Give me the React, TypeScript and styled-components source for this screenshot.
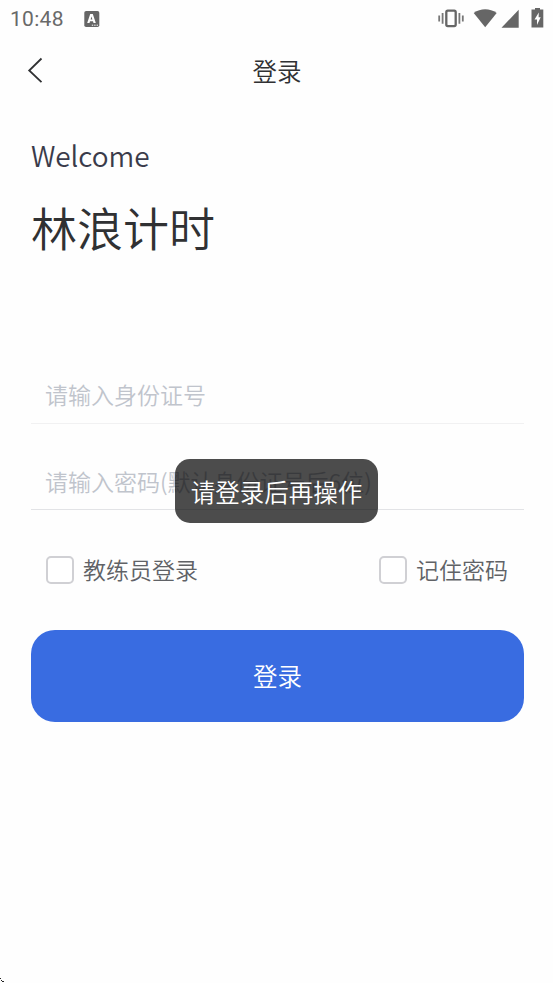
import React from "react";
import styled, { createGlobalStyle } from "styled-components";

const GlobalStyle = createGlobalStyle`
  * { box-sizing: border-box; }
  html, body { margin: 0; padding: 0; background: #fefefe; }
  body { font-family: "Noto Sans CJK SC", sans-serif; font-weight: 350; overflow: hidden; }
  button, input { font-family: inherit; font-weight: inherit; }
`;

const Screen = styled.div`
  position: relative;
  width: 553px;
  height: 983px;
  background: #fefefe;
  overflow: hidden;
`;

const StatusBar = styled.div`
  display: flex;
  align-items: center;
  height: 38px;
  padding: 0 9px 0 10px;
  color: #666;
`;

const Clock = styled.span`
  width: 74px;
  font-family: Roboto, sans-serif;
  font-size: 21px;
  font-weight: 400;
  line-height: 38px;
  letter-spacing: 0.3px;
  color: #696969;
`;

const StatusIcons = styled.div`
  display: flex;
  align-items: center;
  margin: -2px 0 0 auto;
`;

const Glyph = styled.svg<{ $gap?: number }>`
  display: block;
  flex: none;
  margin-left: ${(p) => p.$gap ?? 0}px;
`;

const NavBar = styled.header`
  display: grid;
  grid-template-columns: 60px 1fr 60px;
  align-items: start;
  height: 65px;
`;

const BackButton = styled.button`
  display: flex;
  align-items: flex-start;
  height: 65px;
  padding: 19px 0 0 27px;
  border: 0;
  background: none;
`;

const NavTitle = styled.h1`
  margin: 0;
  padding-left: 1px;
  text-align: center;
  font-size: 24.5px;
  font-weight: inherit;
  line-height: 65px;
  color: #303133;
`;

const Content = styled.main`
  padding: 30px 29px 0 31px;
`;

const Greeting = styled.p`
  margin: 0;
  font-size: 28px;
  line-height: 44px;
  letter-spacing: -0.1px;
  color: #3a3b4a;
`;

const AppName = styled.h2`
  margin: 16px 0 0;
  font-size: 46px;
  font-weight: inherit;
  line-height: 66px;
  color: #303133;
`;

const Form = styled.form`
  display: flex;
  flex-direction: column;
  margin-top: 106px;
`;

const Field = styled.input<{ $line: string; $height: number; $top: number }>`
  display: block;
  width: 100%;
  height: ${(p) => p.$height}px;
  padding: ${(p) => p.$top}px 14px 0;
  border: 0;
  border-bottom: 1px solid ${(p) => p.$line};
  border-radius: 0;
  outline: 0;
  background: transparent;
  font-size: 23px;
  line-height: 34px;
  color: #303133;
  &::placeholder { color: #c0c4cc; opacity: 1; }
`;

const Options = styled.div`
  display: flex;
  justify-content: space-between;
  margin-top: 43px;
  padding: 0 16px 0 15px;
`;

const Option = styled.label`
  display: flex;
  align-items: center;
  gap: 9px;
  height: 34px;
  font-size: 23px;
  line-height: 34px;
  color: #606266;
`;

const OptionText = styled.span`
  margin-top: -2px;
`;

const CheckBox = styled.input`
  appearance: none;
  width: 28px;
  height: 28px;
  margin: 0;
  border: 2px solid #d0d0d4;
  border-radius: 5px;
  background: #fff;
`;

const Submit = styled.button`
  height: 92px;
  margin-top: 43px;
  padding: 0;
  border: 0;
  border-radius: 24px;
  background: #396ce1;
  font-size: 24.5px;
  line-height: 90px;
  color: #fff;
`;

const Toast = styled.div`
  position: absolute;
  left: 175px;
  top: 459px;
  width: 203px;
  height: 64px;
  border-radius: 15px;
  background: rgba(0, 0, 0, 0.7);
  font-size: 24.5px;
  line-height: 65px;
  text-align: center;
  white-space: nowrap;
  color: #fff;
`;

const Cursor = styled.svg`
  position: absolute;
  left: 0;
  bottom: 0;
`;

export default function App() {
  return (
    <>
      <GlobalStyle />
      <Screen>
        <StatusBar>
          <Clock>10:48</Clock>
          <Glyph width="16" height="17" viewBox="0 0 16 17">
            <rect x="0.3" y="0" width="15" height="16" rx="1.8" fill="#666" />
            <path d="M6.200 3h2.600l3 9H9.500L9 10.300H6L5.500 12H3.200ZM6.600 8.500h1.800L7.500 5.500Z" fill="#fff" fillRule="evenodd" />
            <path d="M7.800 14.200h1.400M10.200 14.200h1.400M12.600 14.200h1.400" stroke="#fff" strokeWidth="1" />
          </Glyph>
          <StatusIcons>
            <Glyph width="26" height="20" viewBox="0 0 26 20">
              <rect x="8.3" y="2.700" width="9.400" height="15.400" rx="1.500" fill="none" stroke="#666" strokeWidth="2.300" />
              <path d="M1.200 7.500v6M4.600 5v10.800M21.400 5v10.800M24.800 7.500v6" stroke="#777" strokeWidth="1.800" />
            </Glyph>
            <Glyph $gap={9} width="25" height="20" viewBox="0 0 25 20">
              <path d="M.7 5C7.700.1 16.700.1 23.700 5L12.200 19.300Z" fill="#666" />
            </Glyph>
            <Glyph $gap={3} width="18" height="20" viewBox="0 0 18 20">
              <path d="M.5 19.700 17.700 1.800V19.700Z" fill="#666" />
            </Glyph>
            <Glyph $gap={12} width="13" height="20" viewBox="0 0 13 20">
              <path d="M4 0h5v1.500H12.300V19.500H.5V1.500H4Z" fill="#666" />
              <path d="M7.800 4.500 3.500 11.600H6V17L9.700 9.300H7.600Z" fill="#fff" />
            </Glyph>
          </StatusIcons>
        </StatusBar>
        <NavBar>
          <BackButton type="button" aria-label="返回">
            <Glyph width="17" height="27" viewBox="0 0 17 27">
              <path d="M14.500 1.500 2.200 13.500 14.500 25.200" fill="none" stroke="#303133" strokeWidth="1.800" />
            </Glyph>
          </BackButton>
          <NavTitle>登录</NavTitle>
        </NavBar>
        <Content>
          <Greeting>Welcome</Greeting>
          <AppName>林浪计时</AppName>
          <Form>
            <Field $line="#f1f1f2" $height={59} $top={0} placeholder="请输入身份证号" />
            <Field $line="#e2e3e6" $height={86} $top={29} placeholder="请输入密码(默认身份证号后6位)" />
            <Options>
              <Option><CheckBox type="checkbox" /><OptionText>教练员登录</OptionText></Option>
              <Option><CheckBox type="checkbox" /><OptionText>记住密码</OptionText></Option>
            </Options>
            <Submit type="button">登录</Submit>
          </Form>
        </Content>
        <Toast role="status">请登录后再操作</Toast>
        <Cursor width="4" height="5" viewBox="0 0 4 5">
          <path d="M0 0h1v1H0zM1 2h1v1H1zM2 3h1v1H2zM3 3h1v1H3z" fill="#222" />
        </Cursor>
      </Screen>
    </>
  );
}
